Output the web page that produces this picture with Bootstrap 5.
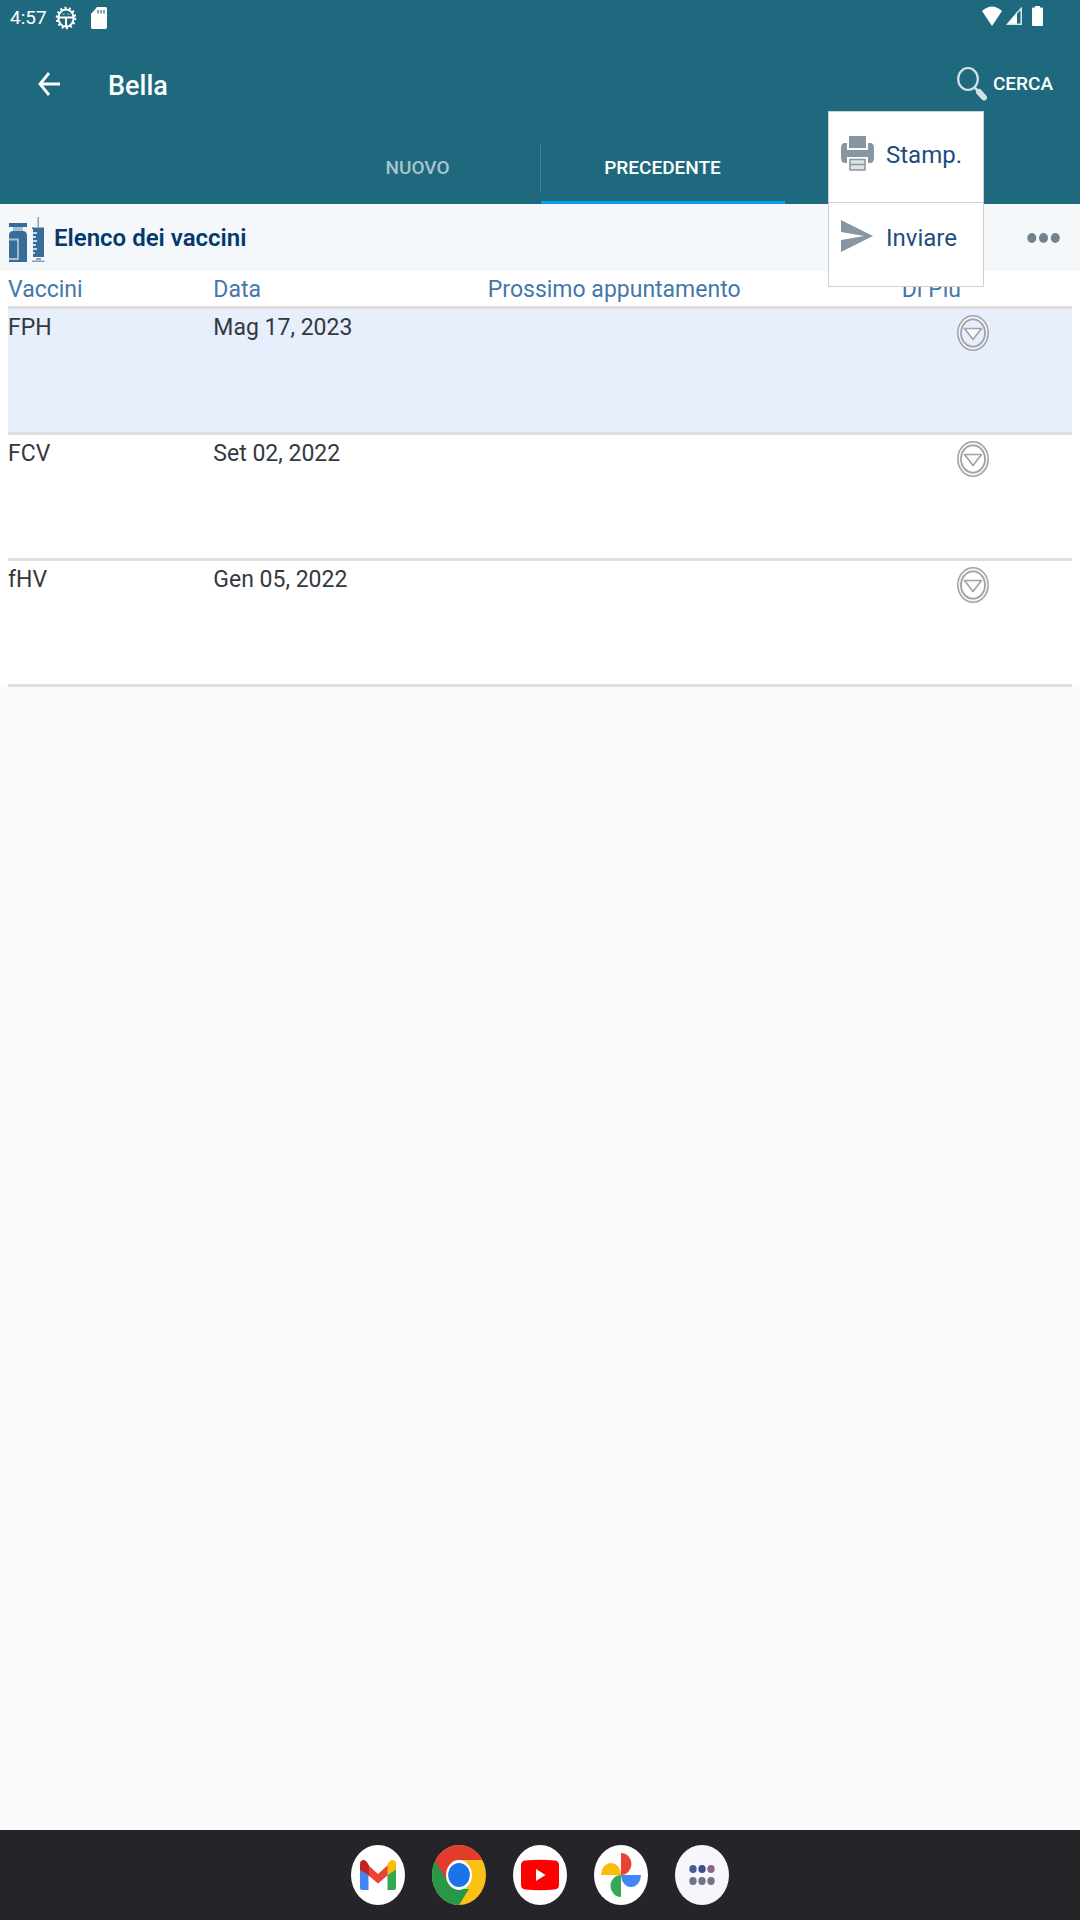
<!DOCTYPE html>
<html lang="it">
<head>
<meta charset="utf-8">
<meta name="viewport" content="width=device-width, initial-scale=1">
<title>Bella – Elenco dei vaccini</title>
<link href="https://cdn.jsdelivr.net/npm/bootstrap@5.3.0/dist/css/bootstrap.min.css" rel="stylesheet">
<style>
  body { font-family: Roboto, "Liberation Sans", sans-serif; font-size: 23px; line-height: 28px; background: #fafafa; color: #333940; }
  svg { display: block; flex: none; }
  .app-head { background: #1e697d; color: #fff; }
  .status { height: 36px; font-size: 19px; line-height: 36px; padding: 0 37px 0 10px; }
  .sd-card { margin-left: 14px; }
  .battery { margin-left: 10px; }
  .app-bar { height: 96px; padding: 0 27px 0 36px; }
  .page-name { font-size: 27px; font-weight: 500; line-height: 32px; margin: 3px 0 0 46px; }
  .small-caps { font-size: 19px; font-weight: 500; line-height: 24px; color: #fff; gap: 6px; }
  .tab-strip { height: 72px; }
  .tab-strip .nav-link { width: 244px; padding: 3px 0 0; border: 0; border-bottom: 3px solid transparent; border-radius: 0; color: #a9c4cc; font-size: 19px; font-weight: 500; line-height: 66px; }
  .tab-strip .nav-link.active { color: #fff; border-color: #03a2ef; }
  .tab-rule { width: 1px; background: #477f8e; margin: 12px 0; }
  .list-head { background: #f4f8fb; height: 67px; padding: 0 20px 0 8px; color: #04396e; }
  .list-name { font-size: 24px; font-weight: 600; line-height: 28px; }
  .vaccines { background: #fff; padding: 0 8px; }
  .vaccines table { table-layout: fixed; width: 100%; border-collapse: separate; border-spacing: 0; }
  .vaccines th { font-weight: 400; color: #4577ab; height: 38px; padding: 5px 0 2px; border-bottom: 3px solid #dfdfdf; line-height: 28px; }
  .vaccines td { height: 126px; padding: 5px 0 0; vertical-align: top; border-bottom: 3px solid #dfdfdf; }
  .vaccines tr.picked td { background: #e7eefc; }
  .vaccines td.more { padding: 5px 0 0 54px; }
  .vaccines td.more button { display: block; }
  .c1 { width: 19.3%; } .c2 { width: 25.8%; } .c3 { width: 38.9%; }
  .pop { top: 111px; right: 96px; width: 156px; z-index: 5; background: #fff; border: 1px solid #cfcfcf; }
  .pop button { height: 90px; padding: 0 0 4px 12px; gap: 12px; font-size: 24px; line-height: 30px; color: #1f4c7e; background: #fff; border: 0; }
  .pop button + button { height: 84px; padding-bottom: 13px; border-top: 1px solid #cfcfcf; }
  .pop svg { margin-bottom: 4px; }
  .dock { height: 90px; gap: 27px; background: #252529; }
  .plain { border: 0; padding: 0; background: none; color: inherit; text-decoration: none; }
</style>
<script src="https://cdn.jsdelivr.net/npm/bootstrap@5.3.0/dist/js/bootstrap.bundle.min.js"></script>
</head>
<body class="position-relative d-flex flex-column min-vh-100">

<header class="app-head">
  <div class="status d-flex align-items-center">
    <span>4:57</span>
    <svg class="ms-2" width="22" height="24" viewBox="0 0 22 24" fill="none" stroke="#fff"><ellipse cx="11" cy="12" rx="9" ry="10" stroke-width="2.5" stroke-dasharray="2 2.3"/><ellipse cx="11" cy="12" rx="7.6" ry="8.6" stroke-width="2"/><path d="M4 11.5h14M11 12v8" stroke-width="2"/><path d="M7 8h3M12 8h3" stroke-width="1" opacity=".5"/></svg>
    <svg class="sd-card" width="16" height="22" viewBox="0 0 16 22"><path fill="#fff" d="M6 0h8.500Q16 0 16 2v18q0 2-1.500 2h-13Q0 22 0 20V7z"/><path stroke="#1e697d" stroke-width="1.200" d="M7 3v3.500M10 3v3.500M13 3v3.500"/></svg>
    <span class="ms-auto mb-1 d-flex align-items-center">
      <svg width="20" height="20" viewBox="0 0 20 20"><path fill="#fff" d="M0 5Q10-4 20 5L10 20z"/></svg>
      <svg class="ms-1" width="16" height="18" viewBox="0 0 16 18"><path fill="#fff" d="M0 18L11 5v13z"/><path fill="none" stroke="#d2e1e5" stroke-width="1.600" d="M11 6l4.200-4.500v15.700H1"/></svg>
      <svg class="battery" width="11" height="20" viewBox="0 0 11 20"><path fill="#fff" d="M3 0h5v1.500h2q1 0 1 1V19q0 1-1 1H1q-1 0-1-1V2.500q0-1 1-1h2z"/></svg>
    </span>
  </div>
  <div class="app-bar d-flex align-items-center">
    <button class="plain" type="button" aria-label="Indietro"><svg width="26" height="26" viewBox="0 0 26 26" fill="none" stroke="#fff" stroke-width="2.800"><path d="M24 13H4M13 2L4 13l9 11"/></svg></button>
    <h1 class="page-name">Bella</h1>
    <button class="plain small-caps ms-auto d-flex align-items-center" type="button">
      <svg width="30" height="34" viewBox="0 0 30 34"><ellipse cx="11" cy="12" rx="9.800" ry="11" fill="none" stroke="#d2e1e5" stroke-width="2.200"/><path stroke="#d2e1e5" stroke-width="2.500" d="M17 20l4 4"/><path stroke="#d2e1e5" stroke-width="6" stroke-linecap="round" d="M22 25l5 5.500"/></svg>CERCA</button>
  </div>
  <nav class="tab-strip nav justify-content-center flex-nowrap">
    <a class="nav-link text-center" href="#">NUOVO</a>
    <span class="tab-rule"></span>
    <a class="nav-link active text-center" href="#" aria-current="page">PRECEDENTE</a>
  </nav>
</header>

<main class="flex-grow-1">
  <div class="list-head d-flex align-items-center">
    <svg class="mt-1" width="38" height="46" viewBox="0 0 38 46">
      <g fill="#396d99"><path d="M1 6h18v4H1zM1 19q0-5 4-5h10q4 0 4 5v26H1zM25 12h11v28H25zM24 10.500h12v1.500H24z"/></g>
      <path fill="#7fa2c0" d="M29.500 0h1.500v11h-1.500zM28 41h5v2h-5zM24 43.500h12.500v1.500H24z"/>
      <path fill="#a9c1d5" d="M5 10h10v4H5z"/><path fill="none" stroke="#a9c1d5" stroke-width="1.800" d="M1 22.500h9v19.500H1"/>
      <path stroke="#f4f8fb" stroke-width="1.500" d="M24 16h5M24 20h4M24 24h5M24 28h4M24 32h5M24 36h3"/>
    </svg>
    <h2 class="list-name mb-0 ms-2">Elenco dei vaccini</h2>
    <button class="plain ms-auto" type="button" aria-label="Altro"><svg width="33" height="12" viewBox="0 0 33 12" fill="#71838f"><ellipse cx="4.800" cy="6" rx="4.500" ry="5"/><ellipse cx="16.500" cy="6" rx="4.500" ry="5"/><ellipse cx="28.300" cy="6" rx="4.500" ry="5"/></svg></button>
  </div>
  <div class="vaccines">
    <svg width="0" height="0" class="position-absolute"><symbol id="down" viewBox="0 0 34 38"><g fill="none" stroke="#a0a2a6"><ellipse cx="17" cy="19" rx="14" ry="15.800" stroke="#f2f3f5" stroke-width="3"/><ellipse cx="17" cy="19" rx="15.200" ry="17.200" stroke-width="1.500"/><ellipse cx="17" cy="19" rx="12" ry="13.600" stroke-width="1.800"/><path fill="#fafafa" stroke-width="1.600" stroke-linejoin="round" d="M8.500 14.500h17L17 25.500z"/></g></symbol></svg>
    <table>
      <colgroup><col class="c1"><col class="c2"><col class="c3"><col></colgroup>
      <thead><tr><th scope="col">Vaccini</th><th scope="col">Data</th><th scope="col">Prossimo appuntamento</th><th scope="col">Di Più</th></tr></thead>
      <tbody>
        <tr class="picked"><td>FPH</td><td>Mag 17, 2023</td><td></td><td class="more"><button class="plain" type="button" aria-label="Di più: FPH"><svg width="34" height="38"><use href="#down"/></svg></button></td></tr>
        <tr><td>FCV</td><td>Set 02, 2022</td><td></td><td class="more"><button class="plain" type="button" aria-label="Di più: FCV"><svg width="34" height="38"><use href="#down"/></svg></button></td></tr>
        <tr><td>fHV</td><td>Gen 05, 2022</td><td></td><td class="more"><button class="plain" type="button" aria-label="Di più: fHV"><svg width="34" height="38"><use href="#down"/></svg></button></td></tr>
      </tbody>
    </table>
  </div>
</main>

<div class="pop position-absolute">
  <button class="d-flex align-items-center w-100" type="button">
    <svg width="33" height="35" viewBox="0 0 33 35"><g fill="#8796a1"><path d="M8 0h17v12H8zM0 12q0-5 4-5h2v7h21V7h2q4 0 4 5v10q0 5-4 5h-2v-6H6v6H4q-4 0-4-5z"/></g><path fill="#dfe3e6" stroke="#8796a1" stroke-width="1.500" d="M9 23.500h15v10.500H9zM9 28.500h15"/></svg>
    <span>Stamp.</span>
  </button>
  <button class="d-flex align-items-center w-100" type="button">
    <svg width="33" height="32" viewBox="0 0 33 32"><path fill="#8796a1" d="M0 0l32 16L0 32V20l23-4L0 12z"/></svg>
    <span>Inviare</span>
  </button>
</div>

<footer class="dock d-flex justify-content-center align-items-center">
  <a href="#" aria-label="Gmail"><svg width="54" height="60" viewBox="0 0 54 60"><ellipse cx="27" cy="30" rx="27" ry="30" fill="#fff"/><path fill="#4285f4" d="M9 24l8.500 6v15H11q-2 0-2-2z"/><path fill="#34a853" d="M36.500 30l8.500-6v19q0 2-2 2h-6.500z"/><path fill="#ea4335" d="M17 20l10 9 10-9v10L27 38.500 17 30z"/><path fill="#c5221f" d="M9 19q0-4 4-4 2 0 5 5.500v10L9 25z"/><path fill="#fbbc04" d="M45 19q0-4-4-4-2 0-4.500 4v11l8.500-6z"/></svg></a>
  <a href="#" aria-label="Chrome"><svg width="54" height="60" viewBox="0 0 54 60"><defs><clipPath id="disc"><ellipse cx="27" cy="30" rx="27" ry="30"/></clipPath></defs><g clip-path="url(#disc)"><path fill="#fbc116" d="M0 0h54v60H0z"/><path fill="#279847" d="M0 10l4 6 12 20 11 8h10L27 60H0z"/><path fill="#e33b2e" d="M0 0h54v15H27L15 36 3 16 0 10z"/></g><ellipse cx="27" cy="30" rx="13" ry="15" fill="#fff"/><ellipse cx="27" cy="30" rx="10.800" ry="12" fill="#1a73e8"/></svg></a>
  <a href="#" aria-label="YouTube"><svg width="54" height="60" viewBox="0 0 54 60"><ellipse cx="27" cy="30" rx="27" ry="30" fill="#fff"/><path fill="#f00" d="M12 15.500q15-1.500 30 0 4 .500 4 5v19q0 4.500-4 5-15 1.500-30 0-4-.500-4-5v-19q0-4.500 4-5z"/><path fill="#fff" d="M23 24l9.500 6-9.500 6z"/></svg></a>
  <a href="#" aria-label="Foto"><svg width="54" height="60" viewBox="0 0 54 60"><ellipse cx="27" cy="30" rx="27" ry="30" fill="#fff"/><path fill="#ea4335" d="M27 8a10.500 11 0 0 1 0 22z"/><path fill="#4285f4" d="M27 30h20a10 12 0 0 1-20 0z"/><path fill="#34a853" d="M27 30v22a10.500 11 0 0 1 0-22z"/><path fill="#fbbc04" d="M7 30a10 12 0 0 1 20 0z"/></svg></a>
  <button class="plain" type="button" aria-label="Tutte le app"><svg width="54" height="60" viewBox="0 0 54 60"><ellipse cx="27" cy="30" rx="27" ry="30" fill="#f8f6fc"/><g fill="#6f7488"><ellipse cx="18" cy="36" rx="3.700" ry="4"/><ellipse cx="27" cy="36" rx="3.700" ry="4"/><ellipse cx="36" cy="36" rx="3.700" ry="4"/><ellipse cx="18" cy="24" rx="3.700" ry="4" fill="#495e95"/><ellipse cx="27" cy="24" rx="3.700" ry="4" fill="#39508b"/><ellipse cx="36" cy="24" rx="3.700" ry="4" fill="#8a6888"/></g></svg></button>
</footer>
</body>
</html>
